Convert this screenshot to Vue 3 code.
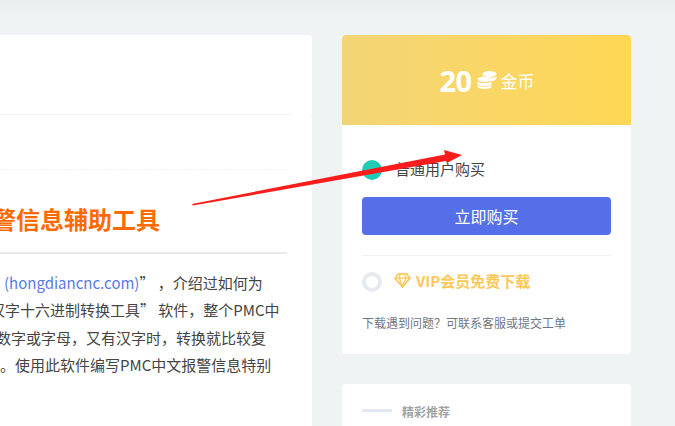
<script setup>
const bodyLines = [
  { id: 1, cls: "l1", link: "(hongdiancnc.com)", text: "” ，介绍过如何为" },
  { id: 2, cls: "l2", text: "汉字十六进制转换工具” 软件，整个PMC中" },
  { id: 3, cls: "l3", text: "数字或字母，又有汉字时，转换就比较复" },
  { id: 4, cls: "l4", text: "。使用此软件编写PMC中文报警信息特别" },
];
</script>
<template>
  <div class="page">
    <div class="top-shade"></div>
    <div class="layout">
      <main class="article">
        <div class="article-head"></div>
        <div class="article-body">
          <div class="dash-line"></div>
          <h1 class="title">警信息辅助工具</h1>
          <div class="title-rule"></div>
          <p v-for="line in bodyLines" :key="line.id" :class="['line', line.cls]">
            <a v-if="line.link" class="link">{{ line.link }}</a>{{ line.text }}
          </p>
        </div>
      </main>
      <aside class="side">
        <section class="buy-card">
          <div class="price-banner">
            <span class="price-num">20</span>
            <svg class="coins" viewBox="0 0 20 18" width="20" height="18">
              <ellipse cx="12.5" cy="3" rx="7" ry="3" fill="#fff" />
              <path d="M5.500 5.200c1.500 1 4 1.500 7 1.500s5.500-.5 7-1.500v2.200c0 1.400-3 2.600-7 2.600-1 0-2-.1-2.800-.3C9 8.200 7.500 7.400 5.500 7.200z" fill="#fff" />
              <ellipse cx="7.500" cy="8.300" rx="7" ry="2.800" fill="#fff" />
              <path d="M.5 10.600c1.500 1.100 4 1.500 7 1.500s5.500-.4 7-1.500v2.100c0 1.400-3 2.500-7 2.500s-7-1.100-7-2.500z" fill="#fff" />
              <path d="M.5 14.300c1.500 1.100 4 1.500 7 1.500s5.500-.4 7-1.500v1.200c0 1.300-3 2.400-7 2.400s-7-1.100-7-2.400z" fill="#fff" />
            </svg>
            <span class="price-unit">金币</span>
          </div>
          <div class="buy-body">
            <label class="option">
              <span class="radio on"></span>
              <span class="option-text">普通用户购买</span>
            </label>
            <button class="buy-btn">立即购买</button>
            <div class="divider"></div>
            <div class="option vip">
              <span class="radio"></span>
              <svg class="gem" viewBox="0 0 18 16" width="17" height="15">
                <path d="M4.500 1h9L17 5.500 9 15 1 5.500z" fill="none" stroke="#fcc858" stroke-width="1.800" stroke-linejoin="round" />
                <path d="M1.500 5.500h15M6.500 1.500 5.500 5.500 9 14l3.500-8.500-1-4" fill="none" stroke="#fcc858" stroke-width="1.400" />
              </svg>
              <span class="vip-text">VIP会员免费下载</span>
            </div>
            <p class="help">下载遇到问题？可联系客服或提交工单</p>
          </div>
        </section>
        <section class="rec-card">
          <span class="rec-bar"></span>
          <span class="rec-title">精彩推荐</span>
        </section>
      </aside>
    </div>
    <svg class="arrow" viewBox="0 0 675 426" width="675" height="426">
      <polygon points="192,204 445,154.500 444,150 462,155 447,163 446,161 193,205.500" fill="#fb1c1c" />
    </svg>
  </div>
</template>

<style scoped>
.page {
  position: relative;
  width: 675px;
  height: 426px;
  overflow: hidden;
  background: #f0f3f4;
  font-family: "Noto Sans CJK SC", "Noto Sans", sans-serif;
}

.top-shade {
  position: absolute;
  top: 0;
  left: 0;
  right: 0;
  height: 16px;
  background: linear-gradient(#e9edee, #f0f3f4);
}

.layout {
  position: relative;
  display: flex;
  gap: 30px;
  padding-top: 35px;
  width: 631px;
}

.article {
  flex: 0 0 312px;
}

.article-head {
  height: 80px;
  background: #fff;
  border-radius: 0 4px 0 0;
  position: relative;
}

.article-head::after {
  content: "";
  position: absolute;
  left: 0;
  bottom: 0;
  width: 292px;
  height: 1px;
  background: #f1f3f4;
}

.article-body {
  position: relative;
  height: 311px;
  background: #fff;
  border-radius: 0 4px 0 0;
  overflow: hidden;
}

.dash-line {
  margin-top: 54px;
  width: 287px;
  border-top: 1px dashed #f1f2f3;
}

.title {
  margin: 17px 0 0 -8px;
  height: 64px;
  font-size: 24px;
  font-weight: 700;
  line-height: 36px;
  color: #ff6a00;
  white-space: nowrap;
  display: flex;
  align-items: center;
}

.title-rule {
  width: 287px;
  height: 2px;
  margin-top: 1px;
  background: #ebebeb;
}

.line {
  margin: 0;
  font-size: 15px;
  line-height: 27.4px;
  color: #444;
  white-space: nowrap;
}

.l1 {
  margin-top: 15px;
  padding-left: 4px;
}

.l2 {
  margin-left: -10px;
}

.l3 {
  margin-left: -4px;
}

.link {
  color: #5b78e8;
}

.side {
  flex: 0 0 289px;
  display: flex;
  flex-direction: column;
  gap: 30px;
}

.buy-card {
  background: #fff;
  border-radius: 4px;
  overflow: hidden;
}

.price-banner {
  height: 90px;
  padding-left: 1px;
  display: flex;
  align-items: center;
  justify-content: center;
  color: #fff;
  background: linear-gradient(90deg, #f3d577, #ffd755);
}

.price-num {
  font-family: "Open Sans", sans-serif;
  font-size: 29px;
  font-weight: 700;
  letter-spacing: -0.5px;
  line-height: 1;
}

.coins {
  margin: 0 4px 0 5px;
}

.price-unit {
  font-size: 17px;
  line-height: 1;
}

.buy-body {
  padding: 31px 20px 21px;
}

.option {
  display: flex;
  align-items: center;
  height: 28px;
}

.radio {
  flex: none;
  width: 20px;
  height: 20px;
  box-sizing: border-box;
  border-radius: 50%;
  border: 4px solid #e6e9f0;
  background: #fff;
}

.radio.on {
  border: none;
  background: #1fcdb7;
}

.option-text {
  margin: 0 0 3px 13px;
  font-size: 15px;
  color: #444;
}

.buy-btn {
  display: block;
  width: 249px;
  height: 38px;
  margin-top: 13px;
  border: none;
  border-radius: 4px;
  background: #546fe7;
  color: #fff;
  font-family: inherit;
  font-size: 16px;
}

.divider {
  height: 1px;
  margin-top: 20px;
  background: #eff0f2;
}

.vip {
  margin-top: 12px;
  height: 28px;
}

.gem {
  margin: 0 0 3px 12px;
}

.vip-text {
  margin: 0 0 4px 5px;
  font-size: 15px;
  font-weight: 700;
  color: #fcc858;
}

.help {
  margin: 17px 0 0;
  font-size: 12px;
  line-height: 20px;
  color: #72777f;
}

.rec-card {
  display: flex;
  align-items: center;
  height: 52px;
  padding: 0 20px;
  background: #fff;
  border-radius: 4px;
}

.rec-bar {
  width: 30px;
  height: 3px;
  background: #e2e9f3;
}

.rec-title {
  margin: 2px 0 0 10px;
  font-size: 12px;
  font-weight: 700;
  color: #a3a3a3;
}

.arrow {
  position: absolute;
  top: 0;
  left: 0;
  pointer-events: none;
}
</style>
